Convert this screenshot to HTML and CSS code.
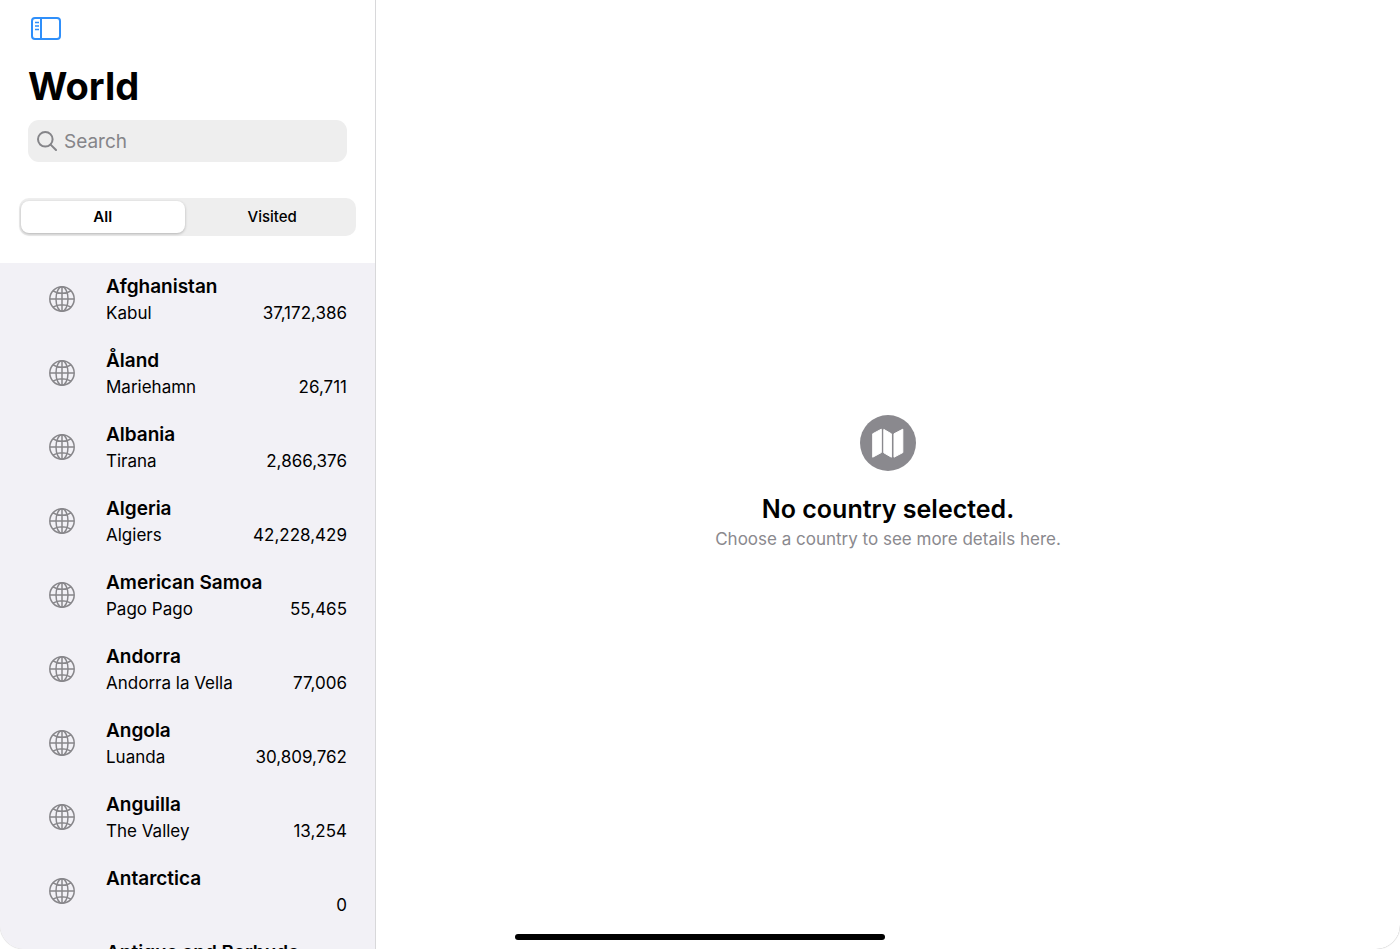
FILE: index.html
```html
<!DOCTYPE html>
<html lang="en">
<head>
    <meta charset="UTF-8">
    <meta name="viewport" content="width=device-width, initial-scale=1.0">
    <title>World</title>
    <link rel="stylesheet" href="styles.css">
</head>
<body>
    <svg class="sprite" aria-hidden="true">
        <symbol id="globe" viewBox="0 0 26 26">
            <g fill="none" stroke="currentColor" stroke-width="1.5">
                <circle cx="13" cy="13" r="12.2"/>
                <ellipse cx="13" cy="13" rx="6" ry="12.2"/>
                <path d="M13 1v24M1 13h24M4 4.8c5 3.4 13 3.4 18 0M4 21.2c5-3.4 13-3.4 18 0"/>
            </g>
        </symbol>
    </svg>

    <div class="app">
        <aside class="sidebar">
            <div class="sidebar-header">
                <button class="sidebar-toggle" type="button" aria-label="Toggle sidebar">
                    <svg width="30" height="24" viewBox="0 0 30 24" fill="none" stroke="currentColor" stroke-width="2">
                        <rect x="1" y="2" width="28" height="21" rx="3"/>
                        <path d="M10 2v21"/>
                        <path d="M4 6.500h4M4 10h4M4 13.500h4" stroke-width="1.500"/>
                    </svg>
                </button>
                <h1>World</h1>
                <label class="search">
                    <svg width="20" height="20" viewBox="0 0 20 20" fill="none" stroke="currentColor" stroke-width="2" stroke-linecap="round">
                        <circle cx="8.300" cy="8.300" r="7.300"/>
                        <path d="M13.600 13.600l5.400 5.400"/>
                    </svg>
                    <input type="search" placeholder="Search" aria-label="Search">
                </label>
            </div>

            <div class="segmented">
                <label class="segment">
                    <input type="radio" name="filter" value="all" checked>
                    <span>All</span>
                </label>
                <label class="segment">
                    <input type="radio" name="filter" value="visited">
                    <span>Visited</span>
                </label>
            </div>

            <ul class="countries">
                <li><a class="country" href="#">
                    <svg class="globe"><use href="#globe"/></svg>
                    <span class="name">Afghanistan</span>
                    <span class="capital">Kabul</span>
                    <span class="population">37,172,386</span>
                </a></li>
                <li><a class="country" href="#">
                    <svg class="globe"><use href="#globe"/></svg>
                    <span class="name">Åland</span>
                    <span class="capital">Mariehamn</span>
                    <span class="population">26,711</span>
                </a></li>
                <li><a class="country" href="#">
                    <svg class="globe"><use href="#globe"/></svg>
                    <span class="name">Albania</span>
                    <span class="capital">Tirana</span>
                    <span class="population">2,866,376</span>
                </a></li>
                <li><a class="country" href="#">
                    <svg class="globe"><use href="#globe"/></svg>
                    <span class="name">Algeria</span>
                    <span class="capital">Algiers</span>
                    <span class="population">42,228,429</span>
                </a></li>
                <li><a class="country" href="#">
                    <svg class="globe"><use href="#globe"/></svg>
                    <span class="name">American Samoa</span>
                    <span class="capital">Pago Pago</span>
                    <span class="population">55,465</span>
                </a></li>
                <li><a class="country" href="#">
                    <svg class="globe"><use href="#globe"/></svg>
                    <span class="name">Andorra</span>
                    <span class="capital">Andorra la Vella</span>
                    <span class="population">77,006</span>
                </a></li>
                <li><a class="country" href="#">
                    <svg class="globe"><use href="#globe"/></svg>
                    <span class="name">Angola</span>
                    <span class="capital">Luanda</span>
                    <span class="population">30,809,762</span>
                </a></li>
                <li><a class="country" href="#">
                    <svg class="globe"><use href="#globe"/></svg>
                    <span class="name">Anguilla</span>
                    <span class="capital">The Valley</span>
                    <span class="population">13,254</span>
                </a></li>
                <li><a class="country" href="#">
                    <svg class="globe"><use href="#globe"/></svg>
                    <span class="name">Antarctica</span>
                    <span class="capital"></span>
                    <span class="population">0</span>
                </a></li>
                <li><a class="country" href="#">
                    <svg class="globe"><use href="#globe"/></svg>
                    <span class="name">Antigua and Barbuda</span>
                </a></li>
            </ul>
        </aside>

        <main class="detail">
            <svg class="empty-icon" viewBox="0 0 56 56" aria-hidden="true">
                <circle cx="28" cy="28" r="28" fill="#8a898e"/>
                <g fill="#fff" stroke="#fff" stroke-linejoin="round">
                    <path d="M12.700 18.800l8.600-4.600v23.400l-8.600 4.600z"/>
                    <path d="M23.800 14.400l7.600 4.400v23.400l-7.600-4.400z"/>
                    <path d="M34 18.800l8.800-4.600v23.400l-8.800 4.600z"/>
                </g>
            </svg>
            <h2>No country selected.</h2>
            <p>Choose a country to see more details here.</p>
        </main>

        <div class="home-indicator"></div>
    </div>
</body>
</html>
```

FILE: styles.css
```css
* {
    box-sizing: border-box;
}

body {
    margin: 0;
    font-family: Inter, "Liberation Sans", sans-serif;
    color: #000;
    background: #fff;
}

h1, h2, p, ul {
    margin: 0;
    padding: 0;
}

.sprite {
    display: none;
}

.app {
    position: relative;
    display: flex;
    height: 100vh;
    overflow: hidden;
    border-radius: 0 0 24px 24px;
    box-shadow: 0 0 1px #999;
}

/* Sidebar */
.sidebar {
    display: flex;
    flex-direction: column;
    width: 376px;
    flex-shrink: 0;
    border-right: 1px solid #d8d8da;
}

.sidebar-header {
    padding: 16px 28px 0;
}

.sidebar-toggle {
    display: block;
    margin-left: 3px;
    padding: 0;
    border: none;
    background: none;
    color: #2f8ffa;
    cursor: pointer;
}

.sidebar-toggle svg {
    display: block;
}

h1 {
    margin: 22px 0 10px;
    font-size: 38px;
    line-height: 48px;
    font-weight: 700;
}

.search {
    display: flex;
    align-items: center;
    gap: 7px;
    height: 42px;
    padding: 0 9px;
    border-radius: 11px;
    background: #eee;
    color: #858589;
}

.search svg {
    flex-shrink: 0;
}

.search input {
    flex: 1;
    min-width: 0;
    padding: 0;
    border: none;
    outline: none;
    background: none;
    font-family: inherit;
    font-size: 19px;
}

.search input::placeholder {
    color: #858589;
}

/* All / Visited */
.segmented {
    display: flex;
    gap: 6px;
    height: 38px;
    margin: 36px 19px 27px;
    padding: 3px 2px;
    border-radius: 10px;
    background: #eee;
}

.segment {
    flex: 1;
    position: relative;
}

.segment input {
    position: absolute;
    opacity: 0;
}

.segment span {
    display: block;
    border-radius: 8px;
    font-size: 15px;
    line-height: 32px;
    font-weight: 500;
    text-align: center;
    cursor: pointer;
}

.segment input:checked + span {
    background: #fff;
    font-weight: 600;
    box-shadow: 0 1px 3px rgba(0, 0, 0, 0.25);
}

/* Country list */
.countries {
    flex: 1;
    min-height: 0;
    overflow: hidden;
    list-style: none;
    background: #f2f1f6;
}

.country {
    display: grid;
    grid-template-columns: 26px auto 1fr;
    grid-template-rows: 26px 26px;
    column-gap: 31px;
    padding: 11px 28px 11px 49px;
    line-height: 26px;
    color: inherit;
    text-decoration: none;
}

.globe {
    grid-row: 1 / 3;
    margin-top: 12px;
    width: 26px;
    height: 26px;
    color: #88878b;
}

.name {
    grid-column: 2 / 4;
    font-size: 19px;
    font-weight: 600;
}

.capital {
    font-size: 17px;
}

.population {
    font-size: 17px;
    text-align: right;
}

/* Empty state */
.detail {
    flex: 1;
    display: flex;
    flex-direction: column;
    align-items: center;
    justify-content: center;
    padding-top: 17px;
    text-align: center;
}

.empty-icon {
    width: 56px;
    height: 56px;
    margin-bottom: 21px;
}

h2 {
    font-size: 25px;
    line-height: 34px;
    font-weight: 600;
}

.detail p {
    font-size: 17px;
    line-height: 26px;
    color: #8a898e;
}

.home-indicator {
    position: absolute;
    bottom: 9px;
    left: 50%;
    width: 370px;
    height: 6px;
    margin-left: -185px;
    border-radius: 3px;
    background: #000;
}
```
